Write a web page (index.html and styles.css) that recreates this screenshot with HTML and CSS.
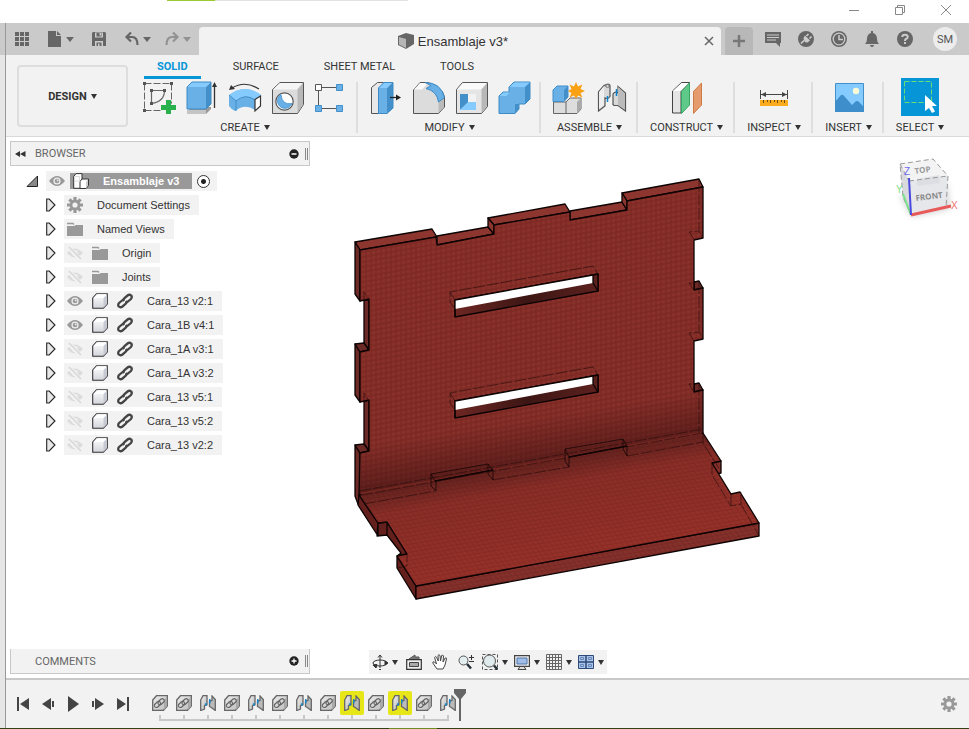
FILE: index.html
```html
<!DOCTYPE html>
<html lang="en">
<head>
    <meta charset="UTF-8">
    <meta name="viewport" content="width=device-width, initial-scale=1.0">
    <title>Ensamblaje v3*</title>
    <link rel="stylesheet" href="styles.css">
</head>
<body>
    <!-- shared icons -->
    <svg class="sprite" aria-hidden="true">
        <defs>
            <linearGradient id="cube-shade" x1="0" y1="0" x2="0" y2="1"><stop offset="0" stop-color="#fff"/><stop offset="1" stop-color="#d4d5dc"/></linearGradient>
            <linearGradient id="steel" x1="0" y1="0" x2="1" y2="1"><stop offset="0" stop-color="#eee"/><stop offset="1" stop-color="#bbb"/></linearGradient>
        </defs>
        <symbol id="i-eye" viewBox="0 0 16 16"><path d="M0 8Q8-2 16 8 8 18 0 8z" fill="#999"/><circle cx="8" cy="8" r="3.6" fill="#eee"/><circle cx="8" cy="8" r="2.3" fill="#999"/><circle cx="8.6" cy="7.4" r=".9" fill="#eee"/></symbol>
        <symbol id="i-hidden" viewBox="0 0 16 16"><path d="M0 8Q8-1 16 8 8 17 0 8z" fill="#dcdcdc"/><circle cx="8" cy="8" r="3" fill="#f2f2f2"/><circle cx="8" cy="8" r="1.8" fill="#dcdcdc"/><path d="M1 2l13 13" stroke="#f2f2f2" stroke-width="4"/><path d="M2 2l12 12" stroke="#d8d8d8" stroke-width="1.6"/></symbol>
        <symbol id="i-folder" viewBox="0 0 16 16"><path d="M0 5h7l2-1h7v11H0z" fill="#999"/><path d="M0 2.5h6l1 1" stroke="#999" fill="none" stroke-width="1.3"/></symbol>
        <symbol id="i-body" viewBox="0 0 16 16"><path d="M.7 5L4.500.7h10.800v10.300l-4 4.300H.7z" fill="url(#cube-shade)" stroke="#333" stroke-width="1.1"/><path d="M11.5 5L15 1.5v9.500L11.5 14.8z" fill="#c8cad3"/><path d="M1.500 5l3.500-3.700h9.500L11.500 5z" fill="#fff"/></symbol>
        <symbol id="i-link" viewBox="0 0 16 16"><g fill="none" stroke="#444" stroke-width="2.3"><path d="M7 8Q5.800 6.500 7.500 5L10.500 2.500q2-1.500 3.700 0 1.300 1.700-.3 3.500L11 8.500Q10 9.500 8.500 9"/><path d="M9 8q1.200 1.500-.5 3L5.500 13.500q-2 1.500-3.700 0-1.300-1.700.3-3.500L5 7.500Q6 6.500 7.500 7"/></g></symbol>
        <symbol id="i-arrow" viewBox="0 0 10 14"><path d="M.7 1h2.500L9 7 3.200 13H.7z" fill="#e8e8e8" stroke="#222" stroke-width="1.1"/></symbol>
        <symbol id="i-gear" viewBox="0 0 16 16"><path d="M8 0v16M0 8h16M2.400 2.400l11.200 11.200M13.600 2.400L2.400 13.600" stroke="#999" stroke-width="3.2"/><circle cx="8" cy="8" r="5.4" fill="#999"/><circle cx="8" cy="8" r="2.6" fill="#f2f2f2"/></symbol>
        <symbol id="t-link" viewBox="0 0 16 16"><path d="M.7 5L4.500.7h10.800v10.300l-3.800 4.300H.7z" fill="url(#steel)" stroke="#666" stroke-width="1.3"/><path d="M12 5l3-3.500V11l-3 4z" fill="#aaa"/><g fill="none" stroke="#666" stroke-width="1.200"><rect x="2" y="7.500" width="7" height="4" rx="2" transform="rotate(-42 5.500 9.500)"/><rect x="5.600" y="4.800" width="7" height="4" rx="2" transform="rotate(-42 9 6.800)"/></g></symbol>
        <symbol id="t-joint" viewBox="0 0 16 16"><path d="M.7 5L3 .7h4v9L4.500 10.500V14L.7 15.500z" fill="url(#steel)" stroke="#666" stroke-width="1.3"/><path d="M15.300 15.500L12 13 9.500 11.500V6L12 5.500V1l3.300 3.500z" fill="#bbb" stroke="#666" stroke-width="1.3"/><path d="M6 11V8M9.800 8.500V4" fill="none" stroke="#0a85d1" stroke-width="1.4"/></symbol>
    </svg>

    <header class="window-bar">
        <button aria-label="Minimize"><svg width="12" height="12"><path d="M1 6.500h10" stroke="#888"/></svg></button>
        <button aria-label="Restore"><svg width="12" height="12" fill="none" stroke="#888"><path d="M1.500 3.500h7v7h-7zM3.500 3.500v-2h7v7h-2"/></svg></button>
        <button aria-label="Close"><svg width="12" height="12"><path d="M1 1l10 10M11 1L1 11" stroke="#888"/></svg></button>
    </header>

    <div class="frame">
        <div class="gutter"></div>
        <div class="app">
            <div class="tab-bar">
                <div class="quick-access">
                    <button aria-label="Data panel"><svg width="16" height="16" fill="#666"><path d="M1 1h4v4H1zM6 1h4v4H6zM11 1h4v4h-4zM1 6h4v4H1zM6 6h4v4H6zM11 6h4v4h-4zM1 11h4v4H1zM6 11h4v4H6zM11 11h4v4h-4z"/></svg></button>
                    <button class="drop" aria-label="File"><svg width="16" height="16" fill="#666"><path d="M1 0h8v5h5v11H1z"/><path d="M10 0l4 4h-4z"/></svg></button>
                    <button aria-label="Save"><svg width="16" height="16"><path d="M1 2l1-1h12l1 1v13H1z" fill="#666"/><path d="M4 1.500h8v5H4zM4 10h8v5H4z" fill="#ccc"/><path d="M5.500 2h5v3.500h-5zM5.500 11.500h5V15h-5z" fill="#666"/><path d="M8.500 2H10v2.500H8.500zM7 12.500h1.500V15H7z" fill="#ccc"/></svg></button>
                    <div class="history">
                        <button class="drop" aria-label="Undo"><svg width="16" height="16" fill="none" stroke="#666" stroke-width="2.200"><path d="M7 1.500L2.500 6 7 10.500M3 6h5q5.500 0 5.500 8"/></svg></button>
                        <button class="drop faded" aria-label="Redo"><svg width="16" height="16" fill="none" stroke="#666" stroke-width="2.200"><path d="M9 1.500L13.500 6 9 10.500M13 6H8Q2.500 6 2.500 14"/></svg></button>
                    </div>
                </div>
                <div class="doc-tab">
                    <div class="doc-title">
                        <svg width="16" height="16"><path d="M0 3l8-3 8 2v9l-8 5-8-4z" fill="#666"/><path d="M1 4l7 2v9l-7-3.500z" fill="#b5b5b5"/></svg>
                        <span>Ensamblaje v3*</span>
                    </div>
                    <button class="close-tab" aria-label="Close tab"><svg width="10" height="10"><path d="M1 1l8 8M9 1L1 9" stroke="#666" stroke-width="1.500"/></svg></button>
                </div>
                <button class="new-tab" aria-label="New tab"><svg width="14" height="14"><path d="M7 1v12M1 7h12" stroke="#777" stroke-width="2.500"/></svg></button>
                <div class="account">
                    <button aria-label="Messages"><svg width="16" height="16"><path d="M0 1h16v11h-1v4l-4-4H0z" fill="#666"/><path d="M2 4h12M2 6.500h12M2 9h9" stroke="#ccc" stroke-width="1.200"/></svg></button>
                    <button aria-label="Extensions"><svg width="16" height="16"><circle cx="8" cy="8" r="8" fill="#666"/><path d="M3 12.500l3-3M10.500 3L8.500 5M13.500 5.500l-2 2" stroke="#ccc" stroke-width="1.700"/><path d="M5.500 7L7 4.500l5 5-2.500 2Q6 12 5.500 7z" fill="#ccc"/></svg></button>
                    <button aria-label="Job status"><svg width="16" height="16"><circle cx="8" cy="8" r="8" fill="#666"/><circle cx="8" cy="8" r="5.800" fill="none" stroke="#ccc" stroke-width="1.300"/><path d="M8 4v4.500h4" fill="none" stroke="#ccc" stroke-width="1.500"/></svg></button>
                    <button aria-label="Notifications"><svg width="16" height="16" fill="#666"><path d="M7 0h2v2q4 1 4 6 0 3 2 5H1q2-2 2-5 0-5 4-6z"/><path d="M6 14h4q0 2-2 2t-2-2z"/></svg></button>
                    <button aria-label="Help"><svg width="16" height="16"><circle cx="8" cy="8" r="8" fill="#666"/><path d="M5.300 6Q5.300 3.700 8 3.700t2.700 2.200Q10.700 7.300 8.900 8 8 8.400 8 10" fill="none" stroke="#ccc" stroke-width="2"/><path d="M7 11h2v2H7z" fill="#ccc"/></svg></button>
                </div>
                <button class="avatar">SM</button>
            </div>

            <div class="ribbon">
                <button class="workspace drop">DESIGN</button>
                <div class="ribbon-body">
                    <nav class="ribbon-tabs">
                        <a href="#solid" class="active">SOLID</a>
                        <a href="#surface">SURFACE</a>
                        <a href="#sheet-metal">SHEET METAL</a>
                        <a href="#tools">TOOLS</a>
                    </nav>
                    <div class="groups">
                        <section class="group">
                            <div class="tools">
                                <button aria-label="Create Sketch"><svg width="34" height="34"><g fill="none" stroke="#666"><path d="M2.500 3.500h27v20M2.500 3.500v27h17" stroke-dasharray="7 2"/><path d="M9.500 23.500v-13h13q0 11-13 13" stroke-width="1.200"/></g><path d="M1 2h3v3H1zM28 2h3v3h-3zM1 29h3v3H1zM8 9h3v3H8zM21 9h3v3h-3zM8 22h3v3H8z" fill="#555"/><path d="M24 20h5v5h5v5h-5v4h-5v-4h-5v-5h5z" fill="#27b04b"/></svg></button>
                                <button aria-label="Extrude"><svg width="34" height="34"><path d="M2 31l5-4h19v2l-5 5H2z" fill="#999"/><path d="M2 30h19v4H2z" fill="#c4c4c4"/><path d="M2 7h19v22H2z" fill="#69b0e6"/><path d="M2 7l5-5h19l-5 5z" fill="#85cbff"/><path d="M21 7l5-5v22l-5 5z" fill="#438fc9"/><path d="M2 29V7l5-5h19v22l-5 5z" fill="none" stroke="#3d8ac4"/><path d="M29.500 28V5" stroke="#333" stroke-width="1.300"/><path d="M27 7l2.500-5L32 7z" fill="#333"/></svg></button>
                                <button aria-label="Revolve"><svg width="34" height="34"><path d="M4 8q13-8 27 1" fill="none" stroke="#333" stroke-width="1.200"/><path d="M1 10l2-5 4 4z" fill="#333"/><path d="M1 15Q17 3 33 15l-6 6v9q-10-7-20 1-3-1-6-5z" fill="#69b0e6"/><path d="M1 15Q17 3 33 15l-6 4q-10-6-19 2z" fill="#85cbff"/><path d="M8 21q9-8 19-1M1 15l7 6v10" fill="none" stroke="#438fc9"/><path d="M27 19.500l5.500-3.500v10L27 31z" fill="#fff" stroke="#333" stroke-width="1.200"/></svg></button>
                                <button aria-label="Hole"><svg width="34" height="34"><path d="M1.500 9.500L9 2.500h23.500v22l-6 9h-25z" fill="#dcdcdc" stroke="#555"/><path d="M2 9.500L9 3h23l-6 6.500z" fill="#f5f5f5"/><path d="M26.500 9.500L32 3v21.500l-5.500 8.500z" fill="#b8b8b8"/><circle cx="13.500" cy="21.500" r="8.700" fill="#fff" stroke="#555" stroke-width="1.200"/><path d="M10 14.500a7.500 7.500 0 1 0 11 9q-10 2-11-9z" fill="#69b0e6" stroke="#438fc9" stroke-width=".8"/></svg></button>
                                <button aria-label="Pattern"><svg width="34" height="34"><path d="M8 7.500h14M4.500 11v14M8 28.500h14" stroke="#555"/><path d="M1.500 4.500h6v6h-6z" fill="#fff" stroke="#555"/><path d="M1.500 25.500h6v6h-6zM22.500 4.500h6v6h-6zM22.500 25.500h6v6h-6z" fill="#69b0e6" stroke="#438fc9"/></svg></button>
                            </div>
                            <button class="group-label drop">CREATE</button>
                        </section>
                        <section class="group">
                            <div class="tools">
                                <button aria-label="Press Pull"><svg width="34" height="34"><path d="M3.500 33.500v-26l6-5h8l-7 6v25z" fill="#e8e8e8" stroke="#555"/><path d="M10 8h9v25.500h-9z" fill="#69b0e6"/><path d="M10 8l6-6h9l-6 6z" fill="#85cbff"/><path d="M19 8l6-6v26l-6 5.500z" fill="#438fc9"/><path d="M10.500 33.500V8L16 2.500h9V28l-6 5.500z" fill="none" stroke="#3d8ac4"/><path d="M22 17.500h8" stroke="#222" stroke-width="1.300"/><path d="M28 14.500l5 3-5 3z" fill="#222"/></svg></button>
                                <button aria-label="Fillet"><svg width="34" height="34"><path d="M2.500 33.500V10L9 2.500h8Q32 8 33.500 17v10l-6 6.500z" fill="#dcdcdc" stroke="#555"/><path d="M3 9.500L9 3h8l-6 6.500z" fill="#fafafa"/><path d="M27.500 21l5.500-4v10l-5.500 6z" fill="#bbb"/><path d="M14 2.500q16 0 19.500 15L27.500 22Q26 11 15 8.500l5-3z" fill="#69b0e6" stroke="#3d8ac4"/></svg></button>
                                <button aria-label="Shell"><svg width="34" height="34"><path d="M2.500 33.500v-24l6-7h25v24l-6 7z" fill="#e5e5e5" stroke="#555"/><path d="M3 9.500L9 3h24l-6 6.500z" fill="#fafafa"/><path d="M27.500 9.500L33 3v23l-5.500 7z" fill="#b8b8b8"/><path d="M6 14h16v16H6z" fill="#fff"/><path d="M6 14h8v9l-8 7z" fill="#438fc9"/><path d="M6 30l8-8h8v8z" fill="#85cbff"/><path d="M14 14h8v8h-8z" fill="#f2f2f2"/></svg></button>
                                <button aria-label="Combine"><svg width="34" height="34"><path d="M2 33.500V16l4-4h6V7l5-5h16v17l-5 5h-6v5l-4 4.500z" fill="#69b0e6" stroke="#3d8ac4"/><path d="M12.500 7l5-4.500H33L28 7z" fill="#85cbff"/><path d="M28 7l5-4.500V19l-5 5zM18 24h4v5l-4 4.500z" fill="#438fc9"/><path d="M2.500 16l4-3.500h6l-3 3.500z" fill="#85cbff"/></svg></button>
                            </div>
                            <button class="group-label drop">MODIFY</button>
                        </section>
                        <section class="group">
                            <div class="tools">
                                <button aria-label="New Component"><svg width="34" height="34"><path d="M2.500 22h13v11.500h-13z" fill="#dcdcdc" stroke="#666"/><path d="M15 22l4-4h11v11l-4 4.500H15z" fill="#ddd" stroke="#666"/><path d="M26 22l4-4v11l-4 4z" fill="#aaa"/><path d="M2 10l4-4h11v11l-4 4.500H2z" fill="#69b0e6" stroke="#438fc9"/><path d="M13 10l4-4v11l-4 4z" fill="#438fc9"/><path d="M25 2l2 4.500 4.500-2-2 4.500L34 11l-4.500 2 2 4.500-4.500-2L25 19l-2-3.500-4.500 2 2-4.500L17 11l3.500-2-2-4.500 4.500 2z" fill="#f9a013"/></svg></button>
                                <button aria-label="Joint"><svg width="34" height="34"><path d="M4.500 12L10 5.500q5-3 6 0v11q-2 3-5 1.500v8l-6.500 5z" fill="#d8d8d8" stroke="#555" stroke-width="1.200"/><path d="M5 12l5-6v19l-5 4z" fill="#eee"/><path d="M31.500 31L24 25.500h-4l-1-1V14q2-3 5-1V6.500l7.500 6.500z" fill="#d8d8d8" stroke="#555" stroke-width="1.200"/><path d="M24 7l7 6.500v16L24 25z" fill="#bbb"/><ellipse cx="13.500" cy="6" rx="2" ry="1.200" fill="#fff" stroke="#666"/><path d="M13.500 16v6M22.500 9v7" stroke="#0a85d1" stroke-width="1.500"/></svg></button>
                            </div>
                            <button class="group-label drop">ASSEMBLE</button>
                        </section>
                        <section class="group wide">
                            <div class="tools">
                                <button aria-label="Construct"><svg width="34" height="34"><path d="M2.500 33V11l9-8.500h8L11 11v22z" fill="#e5e5e5" stroke="#444"/><path d="M3 11l8.500-8H19l-8 8z" fill="#fff"/><path d="M11.500 11.500l8-8.500v22l-8 8.500z" fill="#5fc98a" stroke="#37a763"/><path d="M23.500 11.500l8-8.500v22l-8 8.500z" fill="#e59b6d" stroke="#cf7b48"/></svg></button>
                            </div>
                            <button class="group-label drop">CONSTRUCT</button>
                        </section>
                        <section class="group wide">
                            <div class="tools">
                                <button aria-label="Measure"><svg width="34" height="34"><path d="M3.500 10v9M30.500 10v9M4 14.500h26" stroke="#444"/><path d="M4 14.500l5-2.500v5zM30 14.500L25 12v5z" fill="#444"/><path d="M3 20h28v6H3z" fill="#faab1e"/><path d="M6.500 20v3M10.500 20v2M13.500 20v3M17.500 20v2M20.500 20v3M24.500 20v2M27.500 20v3" stroke="#6b4a0c"/></svg></button>
                            </div>
                            <button class="group-label drop">INSPECT</button>
                        </section>
                        <section class="group wide">
                            <div class="tools">
                                <button aria-label="Insert image"><svg width="34" height="34"><path d="M3.500 3.500h28v28h-28z" fill="#85cbff" stroke="#438fc9"/><path d="M3 22l6-7q2-1 4 2l7 8 3-3q2-2 4 0l5 5v5H3z" fill="#3d8ecb"/><circle cx="24" cy="11" r="3.200" fill="#fbfbd8"/></svg></button>
                            </div>
                            <button class="group-label drop">INSERT</button>
                        </section>
                        <section class="group wide">
                            <div class="tools">
                                <button class="select-tool" aria-label="Select"><svg width="38" height="38"><path d="M3.500 3.500h27v21h-27z" fill="none" stroke="#66dd77" stroke-dasharray="5 2"/><path d="M24 17v16l4-3 3 5 3-1.500-3-5.500h5z" fill="#fff"/></svg></button>
                            </div>
                            <button class="group-label drop">SELECT</button>
                        </section>
                    </div>
                </div>
            </div>

            <main class="viewport">
                <aside class="browser">
                    <div class="panel-head">
                        <button aria-label="Collapse"><svg width="11" height="8" fill="#333"><path d="M5 1v6L0 4zM10.500 1v6L5 4z"/></svg></button>
                        <h2>BROWSER</h2>
                        <button aria-label="Hide"><svg width="10" height="10"><circle cx="5" cy="5" r="4.700" fill="#222"/><path d="M2.500 5h5" stroke="#fff" stroke-width="1.500"/></svg></button>
                        <span class="grip"></span>
                    </div>
                    <ul class="tree">
                        <li class="root">
                            <button class="twist" aria-label="Collapse Ensamblaje v3"><svg width="12" height="12"><path d="M1 11.500L11.500 1v10.500z" fill="#888" stroke="#222"/></svg></button>
                            <div class="chip">
                                <svg class="icon"><use href="#i-eye"/></svg>
                                <span class="picked">
                                    <svg class="icon" viewBox="0 0 16 16"><g stroke="#333" fill="#fff"><path d="M.7 3.500L3 .6h6v6L8 8v7.300H.7z"/><path d="M7 8.500L9 6h6.500v6.500l-2.500 3H7z"/></g><path d="M1 8h6M1 3.500h5.500V8" fill="none" stroke="#ddd"/><path d="M13 8.500L15 6.500v6l-2 2.500z" fill="#ccc"/></svg>
                                    <b>Ensamblaje v3</b>
                                </span>
                                <input type="radio" name="active-component" checked aria-label="Activate Ensamblaje v3">
                            </div>
                        </li>
                        <li><button class="twist" aria-label="Expand"><svg><use href="#i-arrow"/></svg></button><div class="chip"><svg class="icon"><use href="#i-gear"/></svg><span>Document Settings</span></div></li>
                        <li><button class="twist" aria-label="Expand"><svg><use href="#i-arrow"/></svg></button><div class="chip"><svg class="icon"><use href="#i-folder"/></svg><span>Named Views</span></div></li>
                        <li><button class="twist" aria-label="Expand"><svg><use href="#i-arrow"/></svg></button><div class="chip"><svg class="icon"><use href="#i-hidden"/></svg><svg class="icon"><use href="#i-folder"/></svg><span>Origin</span></div></li>
                        <li><button class="twist" aria-label="Expand"><svg><use href="#i-arrow"/></svg></button><div class="chip"><svg class="icon"><use href="#i-hidden"/></svg><svg class="icon"><use href="#i-folder"/></svg><span>Joints</span></div></li>
                        <li><button class="twist" aria-label="Expand"><svg><use href="#i-arrow"/></svg></button><div class="chip"><svg class="icon"><use href="#i-eye"/></svg><svg class="icon"><use href="#i-body"/></svg><svg class="icon"><use href="#i-link"/></svg><span>Cara_13 v2:1</span></div></li>
                        <li><button class="twist" aria-label="Expand"><svg><use href="#i-arrow"/></svg></button><div class="chip"><svg class="icon"><use href="#i-eye"/></svg><svg class="icon"><use href="#i-body"/></svg><svg class="icon"><use href="#i-link"/></svg><span>Cara_1B v4:1</span></div></li>
                        <li><button class="twist" aria-label="Expand"><svg><use href="#i-arrow"/></svg></button><div class="chip"><svg class="icon"><use href="#i-hidden"/></svg><svg class="icon"><use href="#i-body"/></svg><svg class="icon"><use href="#i-link"/></svg><span>Cara_1A v3:1</span></div></li>
                        <li><button class="twist" aria-label="Expand"><svg><use href="#i-arrow"/></svg></button><div class="chip"><svg class="icon"><use href="#i-hidden"/></svg><svg class="icon"><use href="#i-body"/></svg><svg class="icon"><use href="#i-link"/></svg><span>Cara_1A v3:2</span></div></li>
                        <li><button class="twist" aria-label="Expand"><svg><use href="#i-arrow"/></svg></button><div class="chip"><svg class="icon"><use href="#i-hidden"/></svg><svg class="icon"><use href="#i-body"/></svg><svg class="icon"><use href="#i-link"/></svg><span>Cara_13 v5:1</span></div></li>
                        <li><button class="twist" aria-label="Expand"><svg><use href="#i-arrow"/></svg></button><div class="chip"><svg class="icon"><use href="#i-hidden"/></svg><svg class="icon"><use href="#i-body"/></svg><svg class="icon"><use href="#i-link"/></svg><span>Cara_13 v5:2</span></div></li>
                        <li><button class="twist" aria-label="Expand"><svg><use href="#i-arrow"/></svg></button><div class="chip"><svg class="icon"><use href="#i-hidden"/></svg><svg class="icon"><use href="#i-body"/></svg><svg class="icon"><use href="#i-link"/></svg><span>Cara_13 v2:2</span></div></li>
                    </ul>
                </aside>

                <svg class="model" viewBox="350 175 420 440" role="img" aria-label="Assembly">
                    <defs>
                        <linearGradient id="wall" gradientUnits="userSpaceOnUse" x1="520" y1="210" x2="562" y2="466"><stop offset="0" stop-color="#8b312b"/><stop offset=".8" stop-color="#88302a"/><stop offset=".98" stop-color="#5c1f1c"/></linearGradient>
                        <linearGradient id="floor" gradientUnits="userSpaceOnUse" x1="530" y1="464" x2="547" y2="560"><stop offset="0" stop-color="#64231f"/><stop offset=".25" stop-color="#8a2e28"/><stop offset="1" stop-color="#953129"/></linearGradient>
                        <linearGradient id="slot" x1="0" y1="0" x2="1" y2="0"><stop offset="0" stop-color="#6e2723"/><stop offset=".5" stop-color="#3c1614"/><stop offset="1" stop-color="#5c211e"/></linearGradient>
                        <pattern id="mesh" width="5" height="5" patternUnits="userSpaceOnUse" patternTransform="skewY(-10)"><path d="M0 1h5M1 0v5" stroke="#300" stroke-width="1.300" opacity=".17"/></pattern>
                        <pattern id="mesh-floor" width="5" height="4" patternUnits="userSpaceOnUse" patternTransform="skewY(-9) skewX(32)"><path d="M0 1h5M1 0v4" stroke="#300" opacity=".13"/></pattern>
                    </defs>
                    <g stroke="#0c0303" stroke-width="1.300" stroke-linejoin="round">
                        <!-- wall thickness -->
                        <g fill="#8d352f">
                            <path d="M355 242l77-13 5 8-77 13zM437 236l51-9 6 7-57 11zM488 218l77-14 5 8-76 13zM570 211l52-9 5 8-57 10zM622 193l77-14 4 8-76 14z"/>
                            <path d="M488 218l6 7v9l-6-7zM622 193l5 8v9l-5-8z"/>
                        </g>
                        <g fill="#6b2a26">
                            <path d="M355 242l5 8v51l-5-7zM355 344l5 8v50l-5-7zM355 445l5 8v43l-2 8-3-8z"/>
                            <path d="M364 300h5v50l-5-7zM364 402l5-2v51l-5-7z"/>
                            <path d="M355 344l9-1 5 7-9 2zM355 445l9-1 5 7-9 2zM694 282l5-1 4 7-9 2zM694 384l5-1 4 7-9 2z"/>
                        </g>
                        <path d="M360 250l76-13 1 8 57-11v-9l76-13v8l57-10v-9l76-14v51l-9 2v50l9-2v51l-9 2v51l9-2v43L359 495l1-42 9-2v-51l-9 2v-50l9-2v-51l-9 2z" fill="url(#wall)"/>
                        <path d="M360 250l76-13 1 8 57-11v-9l76-13v8l57-10v-9l76-14v51l-9 2v50l9-2v51l-9 2v51l9-2v43L359 495l1-42 9-2v-51l-9 2v-50l9-2v-51l-9 2z" fill="url(#mesh)" stroke="none"/>
                        <!-- slots -->
                        <g id="slot-shape">
                            <path d="M455 300l143-26v17l-143 26z" fill="url(#slot)"/>
                            <path d="M455 300l138-25v8l-138 26z" fill="#fff" stroke="none"/>
                            <path d="M593 275l5-1v17l-5-8z" fill="#5b211e"/>
                            <path d="M455 317v-17l138-25" fill="none"/>
                        </g>
                        <use href="#slot-shape" y="101"/>
                        <!-- base plate -->
                        <path d="M359 495l19 28v13l-20-31zM378 523l9-1v13l-10 1zM387 522l20 32-10 2 4-3-14-18zM397 556l19 30v13l-19-31z" fill="#63201d"/>
                        <path d="M416 586l343-63v13l-343 63zM712 463l9-2v12l-5 1z" fill="#84302b"/>
                        <path d="M359 495l344-62 18 28-9 2 19 31 9-2 19 31-343 63-19-30 10-2-20-32-9 1z" fill="url(#floor)"/>
                    </g>
                    <path d="M359 495l344-62 18 28-9 2 19 31 9-2 19 31-343 63-19-30 10-2-20-32-9 1zM416 586l343-63v13l-343 63z" fill="url(#mesh-floor)"/>
                    <path d="M361 494l341-61" stroke="#712621" stroke-width="3"/>
                    <!-- hidden edges -->
                    <g fill="none" stroke="#250b0a" stroke-width=".8" stroke-dasharray="12 2" opacity=".75">
                        <path d="M361 495l342-62M364 504l71-13M493 480l76-13M627 456l76-14M359 491l344-62"/>
                        <path d="M455 309l-5-7v-10l143-26 5 8M455 410l-5-7v-10l143-26 5 8M450 292l5 8M450 393l5 8"/>
                        <path d="M699 180v51l4 7M694 239l-5-7 10-1M694 290l-5-7h5M699 282v50l4 7M694 341l-5-8 10-1M694 392l-5-8h5M699 384v49"/>
                        <path d="M703 433v10l17 27M712 463v12l19 31 10-2v-12M731 494v12M741 504l18 32M397 568l10-2v-12M364 300v-8l5 7M364 402v-9l5 8"/>
                    </g>
                    <g fill="none" stroke="#100404">
                        <path d="M431 474l57-10 5 6-58 11zM431 474v12l5 5v-10M488 464v10l5 6v-10M565 449l58-10 4 7-58 11zM565 449v12l4 6v-10M623 439v10l4 7v-10" opacity=".75"/>
                        <path d="M435 481l58-11M569 457l58-11" stroke-width="1.500"/>
                    </g>
                </svg>

                <svg class="view-cube" width="66" height="66" viewBox="893 155 66 66" role="img" aria-label="View cube">
                    <defs><filter id="soft"><feGaussianBlur stdDeviation="3"/></filter></defs>
                    <path d="M899 196l12 21 38-8-3-25z" fill="#aaa" opacity=".5" filter="url(#soft)"/>
                    <path d="M899 164l33-5 15 17-39 5z" fill="#f3f3f4"/><path d="M899 164l9 17 2 34-8-18z" fill="#d9dadd"/><path d="M908 181l39-5-2 31-35 8z" fill="#e6e7ea"/>
                    <path d="M916 179l22-4 1 8-23 3z" fill="#d9dce2" opacity=".8"/>
                    <path d="M899 164l33-5 15 17-2 31-35 8-8-18zM908 181l39-5M899 164l9 17" fill="none" stroke="#999" stroke-dasharray="5 3"/>
                    <path d="M902 194l8 21" stroke="#7be08a" stroke-width="2"/><path d="M910 215l40-9" stroke="#e85a5a" stroke-width="3"/><path d="M908 178l2 37" stroke="#4a4ae0" stroke-width="2"/>
                    <text x="914" y="174" transform="rotate(-8 914 174)" class="cube-top">TOP</text>
                    <text x="915" y="201" transform="rotate(-7 915 201)" class="cube-front">FRONT</text>
                    <text x="903" y="175" class="axis-z">Z</text><text x="895" y="193" class="axis-y">Y</text><text x="950" y="209" class="axis-x">X</text>
                </svg>

                <div class="panel-head comments">
                    <span></span>
                    <h2>COMMENTS</h2>
                    <button aria-label="Show comments"><svg width="10" height="10"><circle cx="5" cy="5" r="4.700" fill="#222"/><path d="M2.500 5h5M5 2.500v5" stroke="#fff" stroke-width="1.300"/></svg></button>
                    <span class="grip"></span>
                </div>

                <div class="nav-bar">
                    <button class="drop" aria-label="Orbit"><svg width="16" height="16" fill="none" stroke="#333"><path d="M8 14V2M6 3.500L8 1l2 2.500M7 15.500h2"/><ellipse cx="8" cy="9" rx="7" ry="3"/><path d="M13 7l3 2-3 2zM5 10.500L1 11l3 3z" fill="#333"/></svg></button>
                    <button aria-label="Look at"><svg width="16" height="16"><path d="M3 5l6-4v2h4v2" fill="#777" stroke="#555"/><path d="M.7 5.700h14.600v9.600H.7z" fill="#eee" stroke="#333" stroke-width="1.200"/><path d="M3.500 8.500h9v4h-9z" fill="#aaa" stroke="#444"/></svg></button>
                    <button aria-label="Pan"><svg width="16" height="16"><path d="M5 15L.8 9q-.3-1.800 1.700-1l2 2L2.600 3.500q.6-1.700 1.900-.3L6.300 7 6 1.500q.9-1.600 2 0L8.500 7l1.200-5.500q1.200-1 1.800.5L11 8l2.200-4q1.400-.7 1.300.8L13 11l-2 4z" fill="#fff" stroke="#444"/></svg></button>
                    <button aria-label="Zoom"><svg width="16" height="16"><circle cx="5.500" cy="6.500" r="4.500" fill="#e3eef0" stroke="#555"/><path d="M9 10l4 4.500" stroke="#263238" stroke-width="2.500"/><path d="M11 3.500h5M13.500 1v5M11 7.500h5" stroke="#333"/></svg></button>
                    <button class="drop" aria-label="Fit"><svg width="16" height="16"><path d="M.5.500h15v15H.5z" fill="none" stroke="#555" stroke-dasharray="3 2"/><circle cx="7.500" cy="7" r="6" fill="#dfebed" stroke="#555"/><path d="M12 11.500l3.500 4" stroke="#263238" stroke-width="2.500"/></svg></button>
                    <button class="drop" aria-label="Display settings"><svg width="16" height="16"><path d="M.6 1.600h14.800v10.800H.6z" fill="#eee" stroke="#444" stroke-width="1.200"/><path d="M3 4h10v6H3z" fill="#9fbde6" stroke="#4d74ad"/><path d="M6 12.500h4l2 3H4z" fill="#ddd" stroke="#444"/></svg></button>
                    <button class="drop" aria-label="Grid and snaps"><svg width="16" height="16"><path d="M.5.500h15v15H.5zM3.500 0v16M6.500 0v16M9.500 0v16M12.500 0v16M0 3.500h16M0 6.500h16M0 9.500h16M0 12.500h16" fill="none" stroke="#666"/></svg></button>
                    <button class="drop" aria-label="Viewports"><svg width="16" height="16"><path d="M.5 1.500h15v13H.5z" fill="#a9c4e8" stroke="#2d4a78"/><path d="M8 1v14M0 8h16" stroke="#2d4a78" stroke-width="1.500"/><path d="M2.500 3.500h3v2h-3zM10.500 3.500h3v2h-3zM2.500 10.500h3v2h-3zM10.500 10.500h3v2h-3z" fill="none" stroke="#6588bb"/></svg></button>
                </div>
            </main>

            <footer class="timeline">
                <div class="playback">
                    <button aria-label="Go to start"><svg width="14" height="14" fill="#444"><path d="M1 0h2v14H1zM13 1v12L4 7z"/></svg></button>
                    <button aria-label="Step back"><svg width="14" height="14" fill="#444"><path d="M10 1v12L1 7zM11 4h2v6h-2z"/></svg></button>
                    <button aria-label="Play"><svg width="14" height="16" fill="#444"><path d="M2 0l11 8-11 8z"/></svg></button>
                    <button aria-label="Step forward"><svg width="14" height="14" fill="#444"><path d="M4 1v12l9-6zM1 4h2v6H1z"/></svg></button>
                    <button aria-label="Go to end"><svg width="14" height="14" fill="#444"><path d="M11 0h2v14h-2zM1 1v12l9-6z"/></svg></button>
                </div>
                <ol class="features">
                    <li><button aria-label="Insert 1"><svg class="icon"><use href="#t-link"/></svg></button></li>
                    <li><button aria-label="Insert 2"><svg class="icon"><use href="#t-link"/></svg></button></li>
                    <li><button aria-label="Joint 1"><svg class="icon"><use href="#t-joint"/></svg></button></li>
                    <li><button aria-label="Insert 3"><svg class="icon"><use href="#t-link"/></svg></button></li>
                    <li><button aria-label="Joint 2"><svg class="icon"><use href="#t-joint"/></svg></button></li>
                    <li><button aria-label="Insert 4"><svg class="icon"><use href="#t-link"/></svg></button></li>
                    <li><button aria-label="Joint 3"><svg class="icon"><use href="#t-joint"/></svg></button></li>
                    <li><button aria-label="Insert 5"><svg class="icon"><use href="#t-link"/></svg></button></li>
                    <li><button class="warning" aria-label="Joint 4"><svg class="icon"><use href="#t-joint"/></svg></button></li>
                    <li><button aria-label="Insert 6"><svg class="icon"><use href="#t-link"/></svg></button></li>
                    <li><button class="warning" aria-label="Joint 5"><svg class="icon"><use href="#t-joint"/></svg></button></li>
                    <li><button aria-label="Insert 7"><svg class="icon"><use href="#t-link"/></svg></button></li>
                    <li><button aria-label="Joint 6"><svg class="icon"><use href="#t-joint"/></svg></button></li>
                </ol>
                <svg class="marker" width="12" height="32"><path d="M0 0h12v4L7 10v22H5V10L0 4z" fill="#666"/></svg>
                <button class="settings" aria-label="Timeline settings"><svg class="icon"><use href="#i-gear"/></svg></button>
            </footer>
        </div>
    </div>
    <div class="desktop-edge"></div>
</body>
</html>
```
FILE: styles.css
```css
* {
    box-sizing: border-box;
}
body {
    margin: 0;
    height: 100vh;
    display: flex;
    flex-direction: column;
    overflow: hidden;
    background: #fff;
    color: #333;
    font-family: "Liberation Sans", Arial, sans-serif;
    font-size: 11px;
}
button {
    display: flex;
    align-items: center;
    justify-content: center;
    margin: 0;
    padding: 0;
    border: none;
    background: none;
    color: inherit;
    font: inherit;
    cursor: pointer;
}
svg {
    display: block;
    flex: none;
}
ul, ol {
    list-style: none;
    margin: 0;
    padding: 0;
}
.sprite {
    position: absolute;
    width: 0;
    height: 0;
}
.icon {
    width: 16px;
    height: 16px;
}
.drop::after {
    content: "";
    margin-left: 4px;
    border: 3px solid transparent;
    border-top: 5px solid currentColor;
    border-bottom: none;
}

/* window */
.window-bar {
    display: flex;
    justify-content: flex-end;
    height: 23px;
    background:
        linear-gradient(#9acb2e, #9acb2e) 167px 0 / 48px 1px no-repeat,
        linear-gradient(#e2e2e2, #e2e2e2) 215px 0 / 193px 1px no-repeat;
}
.window-bar button {
    width: 46px;
    height: 20px;
}
.frame {
    flex: 1;
    display: flex;
    min-height: 0;
}
.gutter {
    width: 6px;
    border-right: 1px solid #999;
    background: linear-gradient(#cacaca 32px, #e6e6e6 32px);
}
.app {
    flex: 1;
    display: flex;
    flex-direction: column;
    min-width: 0;
}
.desktop-edge {
    height: 1px;
    background: linear-gradient(#6b8c1e, #6b8c1e) 389px 0 / 48px 1px no-repeat #34400f;
}

/* tab bar */
.tab-bar {
    display: flex;
    height: 32px;
    background: #cacaca;
}
.quick-access {
    display: flex;
    align-items: center;
    gap: 17px;
    padding: 0 8px;
    color: #666;
}
.history {
    display: flex;
    gap: 13px;
}
.faded {
    opacity: 0.55;
}
.quick-access .drop::after {
    border-width: 5px 4px 0;
    margin-left: 3px;
}
.doc-tab {
    flex: 1;
    display: flex;
    align-items: center;
    margin-top: 4px;
    border-radius: 4px 4px 0 0;
    background: #f2f2f2;
}
.doc-title {
    flex: 1;
    display: flex;
    align-items: center;
    justify-content: center;
    gap: 4px;
    padding-left: 10px;
    font-size: 13px;
}
.close-tab {
    width: 24px;
    height: 24px;
}
.new-tab {
    width: 28px;
    margin: 4px 3px 0 4px;
    border-radius: 4px 4px 0 0;
    background: #b8b8b8;
}
.account {
    display: flex;
}
.account button {
    width: 33px;
}
.avatar {
    width: 24px;
    height: 24px;
    margin: 4px 12px;
    border-radius: 50%;
    background: #ececec;
    font-family: Roboto, sans-serif;
    color: #555;
}

/* ribbon */
.ribbon {
    display: flex;
    height: 82px;
    border-bottom: 1px solid #d9d9d9;
    background: #f2f2f2;
    font-family: Roboto, sans-serif;
}
.workspace {
    width: 111px;
    margin: 10px 14px 9px 11px;
    border: 2px solid #dedede;
    border-radius: 4px;
    font-weight: bold;
}
.ribbon-body {
    flex: 1;
}
.ribbon-tabs {
    display: flex;
    gap: 19px;
    height: 24px;
    padding-left: 2px;
}
.ribbon-tabs a {
    padding: 0 13px;
    border-bottom: 3px solid transparent;
    color: #333;
    line-height: 23px;
    text-decoration: none;
}
.ribbon-tabs .active {
    border-color: #0696d7;
    color: #0696d7;
    font-weight: bold;
}
.groups {
    display: flex;
}
.group {
    display: flex;
    flex-direction: column;
    align-items: center;
    padding: 0 10px;
    background: linear-gradient(#dedede, #dedede) right 3px / 2px 51px no-repeat;
}
.group:first-child {
    padding-left: 0;
}
.group:last-child {
    background: none;
}
.group.wide {
    padding: 0 12px;
}
.tools {
    display: flex;
    align-items: center;
    gap: 9px;
    height: 36px;
}
.select-tool {
    background: #0696d7;
}
.group-label {
    height: 16px;
    margin-top: 4px;
}

/* viewport */
.viewport {
    flex: 1;
    display: grid;
    grid-template: 1fr 25px / 300px 1fr 300px;
    min-height: 0;
    padding: 4px;
}
.panel-head {
    display: grid;
    grid-template-columns: 20px 1fr 20px 5px;
    align-items: center;
    height: 25px;
    padding-left: 4px;
    border: 1px solid #c8c8c8;
    background: #f2f2f2;
}
.panel-head button {
    justify-content: flex-start;
}
.panel-head h2 {
    margin: 0;
    color: #666;
    font: 11px Roboto, sans-serif;
}
.panel-head button:nth-of-type(2),
.comments button {
    justify-content: center;
}
.grip {
    width: 3px;
    height: 12px;
    margin-left: 1px;
    border: solid #888;
    border-width: 0 1px;
}
.comments {
    grid-area: 2 / 1;
    border-top: none;
}
.tree {
    display: flex;
    flex-direction: column;
    gap: 4px;
    padding: 5px 0 0 36px;
}
.tree li {
    display: flex;
    height: 20px;
}
.twist {
    width: 18px;
    justify-content: flex-start;
}
.twist svg {
    width: 10px;
    height: 14px;
}
.chip {
    display: flex;
    align-items: center;
    gap: 9px;
    padding: 0 9px 0 3px;
    background: #f2f2f2;
}
.chip > span:last-child {
    padding-left: 5px;
}
.root {
    margin-left: -20px;
}
.root .twist {
    width: 20px;
}
.root .twist svg {
    width: 12px;
    height: 12px;
}
.root .chip {
    gap: 5px;
    padding-right: 7px;
}
.picked {
    display: flex;
    align-items: center;
    gap: 14px;
    padding: 0 13px 0 3px;
    height: 16px;
    background: #999;
    color: #fff;
}
.root input {
    appearance: none;
    width: 13px;
    height: 13px;
    margin: 0;
    border: 1px solid #333;
    border-radius: 50%;
    background: radial-gradient(#222 2px, #fff 3px);
}
.model {
    grid-area: 1 / 2 / 2 / 4;
    align-self: center;
    width: 420px;
    height: 440px;
    margin-left: 40px;
}
.view-cube {
    grid-area: 1 / 3;
    justify-self: end;
    margin: 14px 5px 0 0;
    font-family: "Open Sans", sans-serif;
    font-weight: bold;
}
.cube-top {
    font-size: 8px;
    fill: #999;
}
.cube-front {
    font-size: 8px;
    fill: #8a8a8a;
}
.axis-x, .axis-y, .axis-z {
    font: 10px "Liberation Sans", sans-serif;
}
.axis-x {
    fill: #f07070;
}
.axis-y {
    fill: #7be08a;
}
.axis-z {
    fill: #6c6cf0;
}
.nav-bar {
    grid-area: 2 / 1 / 3 / 4;
    justify-self: center;
    display: flex;
    height: 24px;
    margin-top: 1px;
    background: #f2f2f2;
}
.nav-bar button {
    padding: 0 5px;
}
.nav-bar .drop {
    padding: 0 3px;
}

/* timeline */
.timeline {
    display: flex;
    align-items: flex-start;
    height: 50px;
    padding: 0 12px 0 4px;
    border-top: 2px solid #c8c8c8;
    background: #f2f2f2;
}
.playback {
    display: flex;
    padding-top: 11px;
}
.playback button {
    width: 25px;
    height: 26px;
}
.features {
    display: flex;
    padding: 11px 0 0 13px;
}
.features button {
    width: 24px;
    height: 24px;
    border-radius: 2px;
}
.features .warning {
    background: #e6e619;
}
.features li::after {
    content: "";
    display: block;
    height: 6px;
    background:
        linear-gradient(#c8c8c8, #c8c8c8) center top / 2px 6px no-repeat,
        linear-gradient(#c8c8c8, #c8c8c8) right bottom / 100% 2px no-repeat;
}
.features li:first-child::after {
    background-size: 2px 6px, 50% 2px;
}
.features li:last-child::after {
    background-position: center top, left bottom;
    background-size: 2px 6px, 50% 2px;
}
.marker {
    margin: 9px 0 0 -6px;
}
.settings {
    height: 24px;
    margin: 12px 0 0 auto;
}
```
